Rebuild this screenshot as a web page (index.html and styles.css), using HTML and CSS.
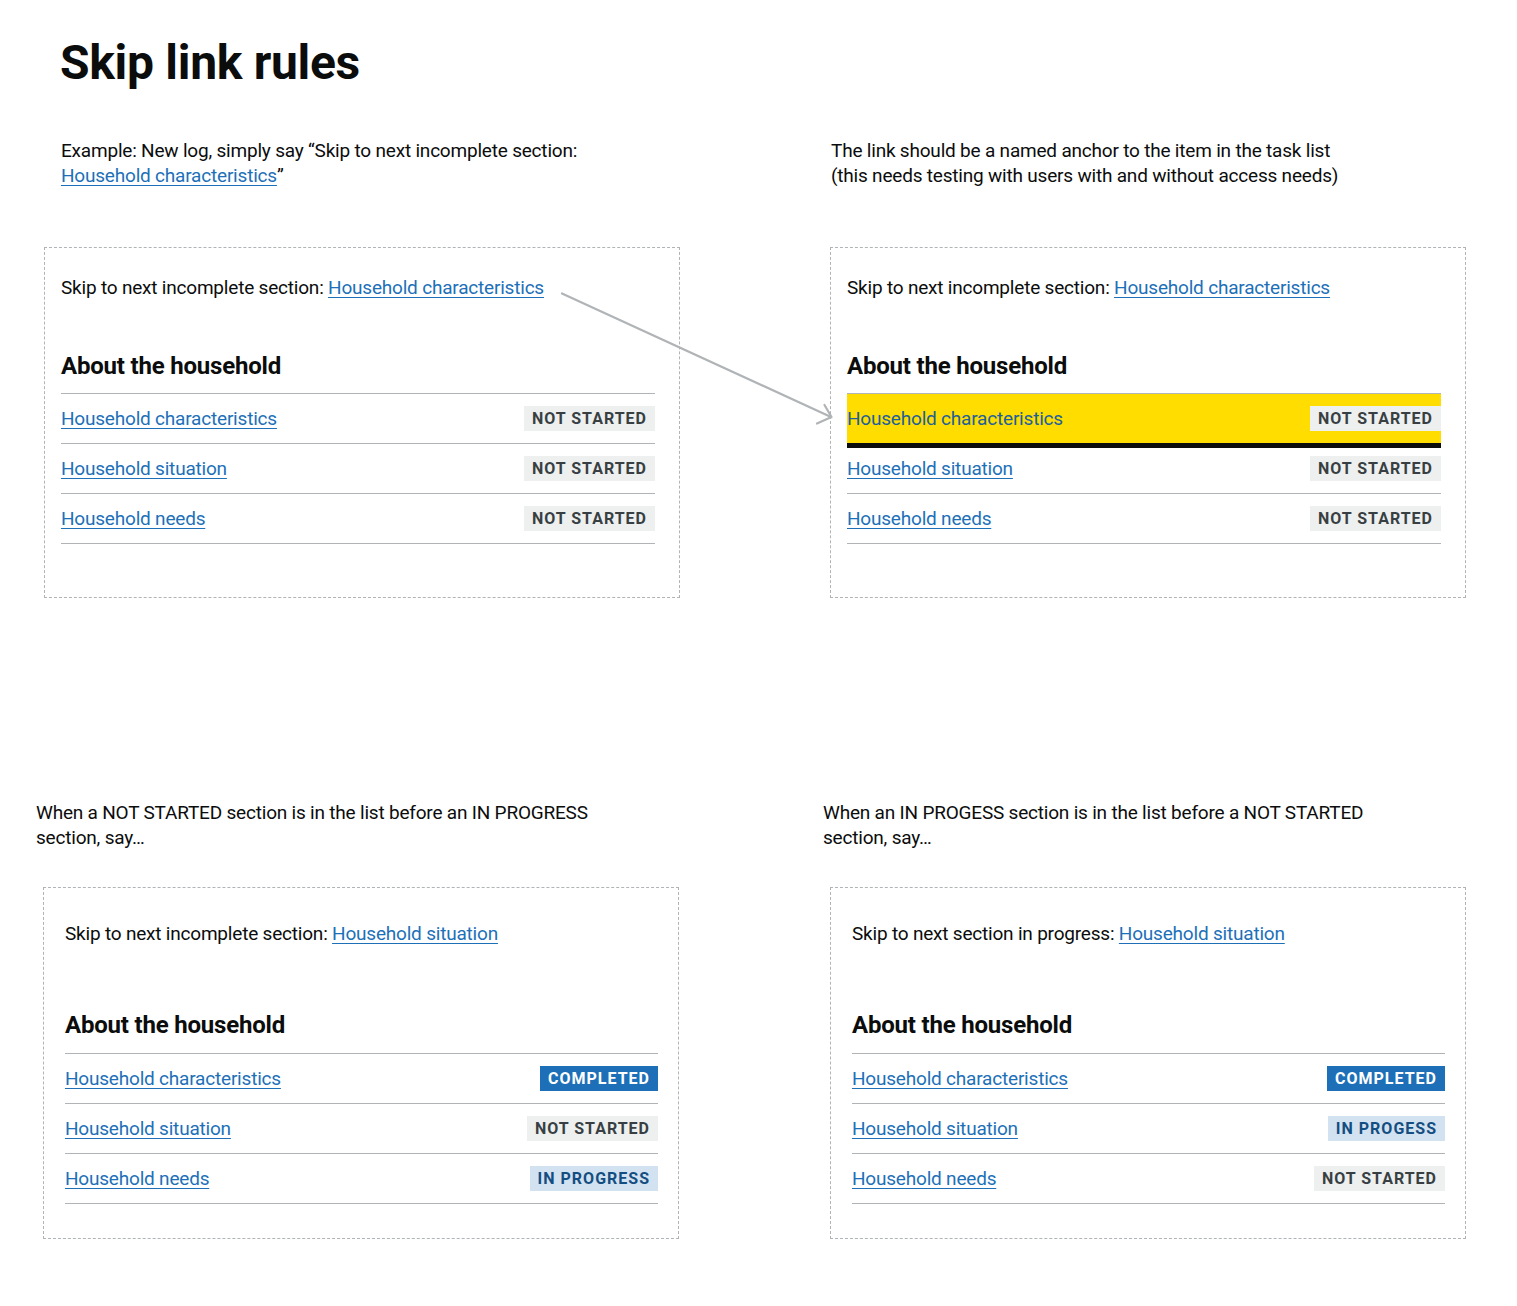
FILE: index.html
```html
<!DOCTYPE html>
<html lang="en">
<head>
<meta charset="utf-8">
<title>Skip link rules</title>
<link rel="stylesheet" href="styles.css">
</head>
<body>
<main class="page">
  <h1 class="title">Skip link rules</h1>

  <section class="grid grid-top">
    <p class="note note-tl">Example: New log, simply say “Skip to next incomplete section: <a href="#" class="link">Household characteristics</a>”</p>
    <p class="note note-tr">The link should be a named anchor to the item in the task list (this needs testing with users with and without access needs)</p>

    <div class="card card-top">
      <p class="skip">Skip to next incomplete section: <a href="#" class="link">Household characteristics</a></p>
      <h2 class="heading">About the household</h2>
      <ul class="tasks">
        <li class="task"><a href="#" class="link">Household characteristics</a><strong class="tag tag-grey">Not started</strong></li>
        <li class="task"><a href="#" class="link">Household situation</a><strong class="tag tag-grey">Not started</strong></li>
        <li class="task"><a href="#" class="link">Household needs</a><strong class="tag tag-grey">Not started</strong></li>
      </ul>
    </div>

    <div class="card card-top">
      <p class="skip">Skip to next incomplete section: <a href="#" class="link">Household characteristics</a></p>
      <h2 class="heading">About the household</h2>
      <ul class="tasks">
        <li class="task task-focus"><a href="#" class="link">Household characteristics</a><strong class="tag tag-grey">Not started</strong></li>
        <li class="task"><a href="#" class="link">Household situation</a><strong class="tag tag-grey">Not started</strong></li>
        <li class="task"><a href="#" class="link">Household needs</a><strong class="tag tag-grey">Not started</strong></li>
      </ul>
    </div>
  </section>

  <section class="grid grid-bottom">
    <p class="note note-b">When a NOT STARTED section is in the list before an IN PROGRESS section, say…</p>
    <p class="note note-b">When an IN PROGESS section is in the list before a NOT STARTED section, say…</p>

    <div class="card card-bottom">
      <p class="skip">Skip to next incomplete section: <a href="#" class="link">Household situation</a></p>
      <h2 class="heading">About the household</h2>
      <ul class="tasks">
        <li class="task"><a href="#" class="link">Household characteristics</a><strong class="tag tag-blue">Completed</strong></li>
        <li class="task"><a href="#" class="link">Household situation</a><strong class="tag tag-grey">Not started</strong></li>
        <li class="task"><a href="#" class="link">Household needs</a><strong class="tag tag-light">In progress</strong></li>
      </ul>
    </div>

    <div class="card card-bottom">
      <p class="skip">Skip to next section in progress: <a href="#" class="link">Household situation</a></p>
      <h2 class="heading">About the household</h2>
      <ul class="tasks">
        <li class="task"><a href="#" class="link">Household characteristics</a><strong class="tag tag-blue">Completed</strong></li>
        <li class="task"><a href="#" class="link">Household situation</a><strong class="tag tag-light">In progess</strong></li>
        <li class="task"><a href="#" class="link">Household needs</a><strong class="tag tag-grey">Not started</strong></li>
      </ul>
    </div>
  </section>

  <svg class="arrow" width="1517" height="700" viewBox="0 0 1517 700" aria-hidden="true">
    <path d="M562 293.5 L831 417" fill="none" stroke="#b1b4b6" stroke-width="2.2" stroke-linecap="round"/>
    <path d="M824.5 405 L831.5 417 L817 423.5" fill="none" stroke="#b1b4b6" stroke-width="2.2" stroke-linecap="round" stroke-linejoin="round"/>
  </svg>
</main>
</body>
</html>
```

FILE: styles.css
```css
* {
  box-sizing: border-box;
}

html, body {
  margin: 0;
  padding: 0;
  background: #ffffff;
}

body {
  font-family: Roboto, "Liberation Sans", Arial, sans-serif;
  color: #0b0c0c;
  font-size: 19px;
  line-height: 25px;
}

.page {
  position: relative;
  width: 1517px;
  min-height: 1306px;
  padding-top: 38px;
}

.title {
  margin: 0 0 50px 60px;
  font-size: 48px;
  line-height: 50px;
  font-weight: 700;
  letter-spacing: -0.3px;
}

.grid {
  display: grid;
  grid-template-columns: 636px 636px;
  column-gap: 150px;
}

.grid-top {
  padding-left: 44px;
  row-gap: 59px;
}

.grid-bottom {
  margin-top: 202px;
  padding-left: 43px;
  column-gap: 151px;
  row-gap: 37px;
}

.note {
  margin: 0;
  font-size: 19px;
  line-height: 25px;
  letter-spacing: -0.2px;
}

.note-tl {
  margin-left: 17px;
  max-width: 600px;
}

.note-tr {
  margin-left: 1px;
  max-width: 520px;
}

.note-b {
  margin-left: -7px;
  max-width: 590px;
}

.skip,
.task .link {
  letter-spacing: -0.2px;
}

.link {
  color: #1d70b8;
  text-decoration: underline;
  text-decoration-thickness: 1px;
  text-underline-offset: 3px;
}

.card {
  border: 1px dashed #b1b4b6;
}

.card-top {
  padding: 27px 24px 53px 16px;
}

.card-bottom {
  padding: 33px 20px 34px 21px;
}

.skip {
  margin: 0;
}

.heading {
  margin: 51px 0 12px;
  font-size: 24px;
  line-height: 30px;
  font-weight: 700;
  letter-spacing: -0.2px;
}

.card-bottom .heading {
  margin-top: 64px;
  margin-bottom: 13px;
}

.tasks {
  list-style: none;
  margin: 0;
  padding: 0;
  border-top: 1px solid #b1b4b6;
}

.task {
  display: flex;
  align-items: center;
  justify-content: space-between;
  height: 50px;
  border-bottom: 1px solid #b1b4b6;
}

.task-focus {
  background: #ffdd00;
  border-bottom-color: #0b0c0c;
  box-shadow: 0 4px 0 #0b0c0c;
  position: relative;
}

.task-focus .link {
  text-decoration: none;
  color: #1d5f9c;
}

.tag {
  display: inline-block;
  padding: 5px 8px 4px;
  font-size: 16px;
  line-height: 16px;
  font-weight: 700;
  letter-spacing: 1px;
  text-transform: uppercase;
}

.tag-grey {
  background: #eeefef;
  color: #383f43;
}

.tag-blue {
  background: #1d70b8;
  color: #ffffff;
}

.tag-light {
  background: #d2e2f1;
  color: #144e81;
}

.arrow {
  position: absolute;
  left: 0;
  top: 0;
  pointer-events: none;
}
```
